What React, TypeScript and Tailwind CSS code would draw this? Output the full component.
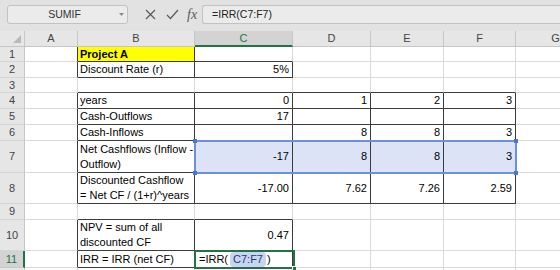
import clsx from 'clsx';

type Cell = {
  lines: string[];
  right?: boolean;
  bold?: boolean;
  yellow?: boolean;
};

const COLS = ['A', 'B', 'C', 'D', 'E', 'F', 'G'];
const ROW_COUNT = 12;

// cells with a thin black border on every side
const boxed = new Set<string>(['1-2', '2-2', '2-3']);
for (let r = 4; r <= 8; r++) for (let c = 2; c <= 6; c++) boxed.add(`${r}-${c}`);
for (let r = 10; r <= 11; r++) for (let c = 2; c <= 3; c++) boxed.add(`${r}-${c}`);

const t = (...lines: string[]): Cell => ({ lines });
const n = (v: string): Cell => ({ lines: [v], right: true });

const data: Record<string, Cell> = {
  '1-2': { lines: ['Project A'], bold: true, yellow: true },
  '2-2': t('Discount Rate (r)'),
  '2-3': n('5%'),
  '4-2': t('years'),
  '4-3': n('0'),
  '4-4': n('1'),
  '4-5': n('2'),
  '4-6': n('3'),
  '5-2': t('Cash-Outflows'),
  '5-3': n('17'),
  '6-2': t('Cash-Inflows'),
  '6-4': n('8'),
  '6-5': n('8'),
  '6-6': n('3'),
  '7-2': t('Net Cashflows (Inflow -', 'Outflow)'),
  '7-3': n('-17'),
  '7-4': n('8'),
  '7-5': n('8'),
  '7-6': n('3'),
  '8-2': t('Discounted Cashflow', '= Net CF / (1+r)^years'),
  '8-3': n('-17.00'),
  '8-4': n('7.62'),
  '8-5': n('7.26'),
  '8-6': n('2.59'),
  '10-2': t('NPV = sum of all', 'discounted CF'),
  '10-3': n('0.47'),
  '11-2': t('IRR = IRR (net CF)'),
};

function isBoxed(r: number, c: number) {
  return boxed.has(`${r}-${c}`);
}

function Toolbar() {
  return (
    <div className="flex items-start h-[31px] pt-[5px] bg-[#e2e2e2]">
      <div className="ml-[7px] w-[121px] h-[19px] flex items-center rounded-[3px] border border-[#c2c2c2] bg-[#ebebeb]">
        <span className="flex-1 text-center text-[10.5px] text-[#333] pl-[2px]">SUMIF</span>
        <svg width="5" height="3" viewBox="0 0 5 3" className="mr-[3px]">
          <path d="M0 0h5L2.5 3z" fill="#8a8a8a" />
        </svg>
      </div>
      <div className="flex items-center h-[19px] ml-[17px] gap-[10px] text-[#5a5a5a]">
        <svg width="11" height="11" viewBox="0 0 11 11">
          <path d="M1 1l9 9M10 1l-9 9" stroke="#5a5a5a" strokeWidth="1.2" fill="none" />
        </svg>
        <svg width="13" height="11" viewBox="0 0 13 11">
          <path d="M1 6l3.5 3.5L12 1" stroke="#5a5a5a" strokeWidth="1.2" fill="none" />
        </svg>
        <span className="font-['Liberation_Serif',serif] italic text-[14px] leading-none text-[#5a5a5a] -ml-[2px]">fx</span>
      </div>
      <div className="ml-[5px] flex-1 h-[19px] flex items-center rounded-l-[3px] border border-r-0 border-[#c2c2c2] bg-[#ebebeb] pl-[9px] text-[10.5px] text-[#222]">
        =IRR(C7:F7)
      </div>
    </div>
  );
}

function FormulaCell() {
  return (
    <div className="flex items-center pl-[2px] text-[11px] text-black">
      =IRR(
      <span className="ml-[2px] px-[3px] rounded-[4px] bg-[#c8d5f1] text-[#1f3a7a]">C7:F7</span>
      <span className="ml-[1px]">)</span>
    </div>
  );
}

export default function App() {
  const cells = [];

  // column headers
  cells.push(
    <div key="corner" className="relative bg-[#e6e6e6] border-r border-b border-[#c6c6c6]">
      <svg width="8" height="8" viewBox="0 0 8 8" className="absolute right-[3px] bottom-[3px]">
        <path d="M8 0v8H0z" fill="#b9b9b9" />
      </svg>
    </div>
  );
  COLS.forEach((col) => {
    const active = col === 'C';
    cells.push(
      <div
        key={`h-${col}`}
        className={clsx(
          'flex items-center justify-center border-r text-[11px]',
          active
            ? 'bg-[#d3d3d3] text-[#217346] border-b-2 border-b-[#217346] border-r-[#c6c6c6]'
            : 'bg-[#e6e6e6] text-[#444] border-b border-[#c6c6c6]'
        )}
      >
        {col}
      </div>
    );
  });

  for (let r = 1; r <= ROW_COUNT; r++) {
    const active = r === 11;
    cells.push(
      <div
        key={`r-${r}`}
        className={clsx(
          'flex items-center justify-center border-b text-[11px]',
          active
            ? 'bg-[#d3d3d3] text-[#217346] border-r-2 border-r-[#217346] border-b-[#c6c6c6]'
            : 'bg-[#e6e6e6] text-[#444] border-r border-[#c6c6c6] border-b-[#d4d4d4]'
        )}
      >
        {r < ROW_COUNT ? r : ''}
      </div>
    );

    COLS.forEach((_, i) => {
      const c = i + 1;
      const cell = data[`${r}-${c}`];
      const darkR = isBoxed(r, c) || isBoxed(r, c + 1);
      const darkB = isBoxed(r, c) || isBoxed(r + 1, c);
      const picked = r === 7 && c >= 3 && c <= 6;
      cells.push(
        <div
          key={`${r}-${c}`}
          className={clsx(
            'flex flex-col justify-center border-r border-b text-[11px] leading-[15px] text-black whitespace-nowrap',
            darkR ? 'border-r-[#3c3c3c]' : 'border-r-[#dadada]',
            darkB ? 'border-b-[#3c3c3c]' : 'border-b-[#dadada]',
            cell?.right ? 'items-end pl-[2px] pr-[3px]' : 'items-start px-[2px]',
            cell?.bold && 'font-bold',
            cell?.yellow ? 'bg-[#ffff00]' : picked ? 'bg-[#dce3f6]' : 'bg-white'
          )}
        >
          {r === 11 && c === 3 ? (
            <FormulaCell />
          ) : (
            cell?.lines.map((line) => <span key={line}>{line}</span>)
          )}
        </div>
      );
    });
  }

  return (
    <div className="w-[560px] h-[270px] overflow-hidden bg-white font-['Liberation_Sans',Arial,sans-serif]">
      <Toolbar />
      <div className="relative grid grid-cols-[25px_53px_117px_98px_78px_73px_72px_80px] grid-rows-[16px_15px_16px_15px_16px_16px_16px_32px_31px_16px_31px_17px_20px]">
        {cells}

        {/* range reference C7:F7 */}
        <div className="absolute left-[194px] top-[109px] w-[323px] h-[34px] border-2 border-[#6f8fdb] pointer-events-none">
          <div className="absolute -left-[3px] -top-[3px] w-[4px] h-[4px] bg-[#4f74d0]" />
          <div className="absolute -right-[3px] -top-[3px] w-[4px] h-[4px] bg-[#4f74d0]" />
          <div className="absolute -left-[3px] -bottom-[3px] w-[4px] h-[4px] bg-[#4f74d0]" />
          <div className="absolute -right-[3px] -bottom-[3px] w-[4px] h-[4px] bg-[#4f74d0]" />
        </div>

        {/* active cell C11 */}
        <div className="absolute left-[194px] top-[219px] w-[101px] h-[19px] border-2 border-[#217346] pointer-events-none">
          <div className="absolute -right-[4px] -bottom-[4px] w-[5px] h-[5px] bg-[#217346] border border-white" />
        </div>
      </div>
    </div>
  );
}
